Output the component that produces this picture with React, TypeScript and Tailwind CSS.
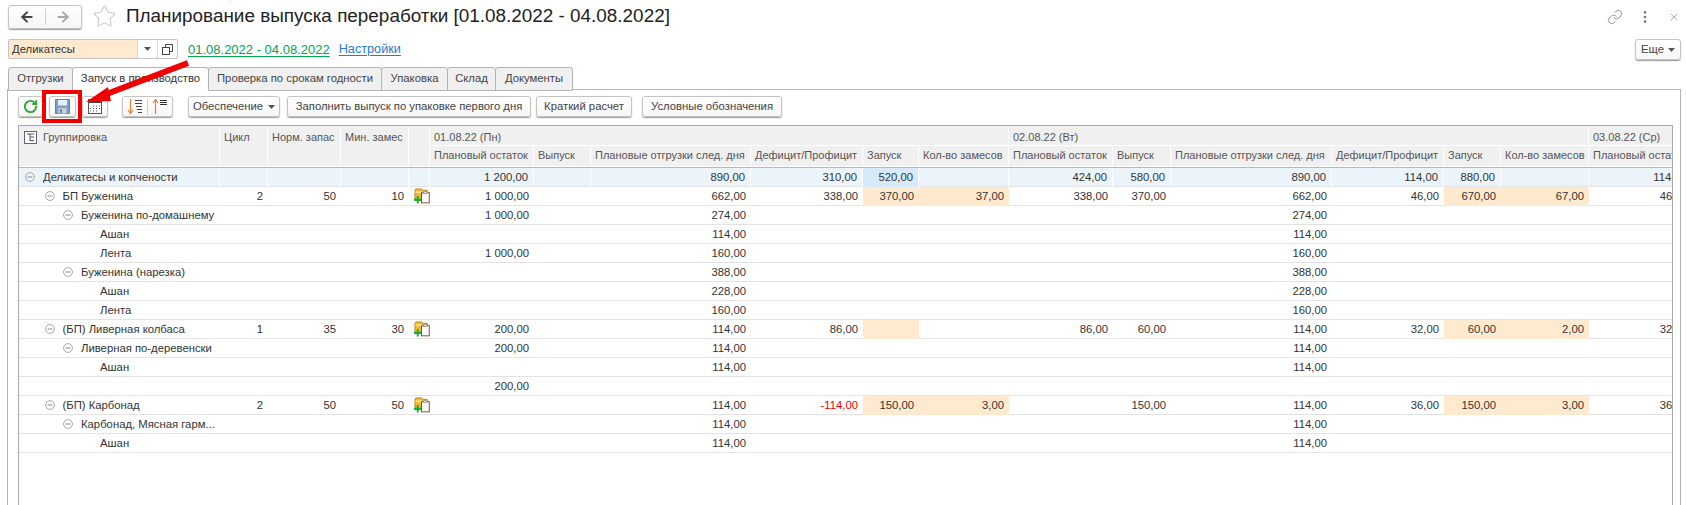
import { ArrowLeft, ArrowRight, EllipsisVertical, Link, RotateCw, Star, X } from "lucide-react";
import type { ReactNode } from "react";

const gridCols =
  "grid grid-cols-[201px_48px_73px_68px_21px_104px_57px_160px_112px_56px_90px_104px_58px_161px_112px_57px_88px_104px]";

const btn =
  "flex items-center justify-center bg-gradient-to-b from-white to-[#f6f6f6] border border-[#c4c4c4] rounded-[3px] shadow-[0_1px_1px_#9a9a9a] text-[#444]";

type Row = {
  name: string;
  level: number;
  tree?: boolean;
  plan?: string[];
  icon?: boolean;
  values: string[];
  warm?: number[];
  picked?: number[];
  red?: number[];
};

// индексы values: 0-5 первый день, 6-11 второй день, 12 третий
const rows: Row[] = [
  {
    name: "Деликатесы и копчености",
    level: 0,
    tree: true,
    values: ["1 200,00", "", "890,00", "310,00", "520,00", "", "424,00", "580,00", "890,00", "114,00", "880,00", "", "114,00"],
    picked: [4],
  },
  {
    name: "БП Буженина",
    level: 1,
    tree: true,
    plan: ["2", "50", "10"],
    icon: true,
    values: ["1 000,00", "", "662,00", "338,00", "370,00", "37,00", "338,00", "370,00", "662,00", "46,00", "670,00", "67,00", "46,00"],
    warm: [4, 5, 10, 11],
  },
  {
    name: "Буженина по-домашнему",
    level: 2,
    tree: true,
    values: ["1 000,00", "", "274,00", "", "", "", "", "", "274,00", "", "", "", ""],
  },
  { name: "Ашан", level: 3, values: ["", "", "114,00", "", "", "", "", "", "114,00", "", "", "", ""] },
  { name: "Лента", level: 3, values: ["1 000,00", "", "160,00", "", "", "", "", "", "160,00", "", "", "", ""] },
  {
    name: "Буженина (нарезка)",
    level: 2,
    tree: true,
    values: ["", "", "388,00", "", "", "", "", "", "388,00", "", "", "", ""],
  },
  { name: "Ашан", level: 3, values: ["", "", "228,00", "", "", "", "", "", "228,00", "", "", "", ""] },
  { name: "Лента", level: 3, values: ["", "", "160,00", "", "", "", "", "", "160,00", "", "", "", ""] },
  {
    name: "(БП) Ливерная колбаса",
    level: 1,
    tree: true,
    plan: ["1", "35", "30"],
    icon: true,
    values: ["200,00", "", "114,00", "86,00", "", "", "86,00", "60,00", "114,00", "32,00", "60,00", "2,00", "32,00"],
    warm: [4, 10, 11],
  },
  {
    name: "Ливерная по-деревенски",
    level: 2,
    tree: true,
    values: ["200,00", "", "114,00", "", "", "", "", "", "114,00", "", "", "", ""],
  },
  { name: "Ашан", level: 3, values: ["", "", "114,00", "", "", "", "", "", "114,00", "", "", "", ""] },
  { name: "", level: 3, values: ["200,00", "", "", "", "", "", "", "", "", "", "", "", ""] },
  {
    name: "(БП) Карбонад",
    level: 1,
    tree: true,
    plan: ["2", "50", "50"],
    icon: true,
    values: ["", "", "114,00", "-114,00", "150,00", "3,00", "", "150,00", "114,00", "36,00", "150,00", "3,00", "36,00"],
    warm: [4, 5, 10, 11],
    red: [3],
  },
  {
    name: "Карбонад, Мясная гарм...",
    level: 2,
    tree: true,
    values: ["", "", "114,00", "", "", "", "", "", "114,00", "", "", "", ""],
  },
  { name: "Ашан", level: 3, values: ["", "", "114,00", "", "", "", "", "", "114,00", "", "", "", ""] },
];

const subHeaders = ["Плановый остаток", "Выпуск", "Плановые отгрузки след. дня", "Дефицит/Профицит", "Запуск", "Кол-во замесов"];

const levelPadding = ["pl-[24px]", "pl-[43.5px]", "pl-[62px]", "pl-[81px]"];

const Triangle = () => (
  <svg width="7" height="4" viewBox="0 0 7 4">
    <path d="M0 0h7L3.5 4z" fill="#555" />
  </svg>
);

const TreeMinus = () => (
  <svg width="10" height="10" viewBox="0 0 10 10" className="absolute left-[-18px] top-[4px]">
    <circle cx="5" cy="5" r="4.4" fill="none" stroke="#a8a8a8" />
    <path d="M2.5 5h5" stroke="#888" />
  </svg>
);

const FolderPlus = () => (
  <svg width="16" height="17" viewBox="0 0 17 17" className="shrink-0">
    <path d="M1 14V3l1-1.5h6L9.5 3H14v4H8v7z" fill="#f2b933" stroke="#a8700f" strokeWidth="0.8" />
    <path d="M1.5 5h12" stroke="#ffe9a0" strokeWidth="1.5" />
    <rect x="8" y="5.5" width="8.2" height="10.8" fill="#fff" stroke="#7a4a1e" />
    <rect x="10" y="4.5" width="4" height="2" fill="#ddd" stroke="#777" strokeWidth="0.6" />
    <path d="M4 9v8M0 13h8" stroke="#12b02e" strokeWidth="2" />
  </svg>
);

const SaveIcon = () => (
  <svg width="15" height="15" viewBox="0 0 15 15">
    <path d="M0.5 0.5h14v14h-14z" fill="#7aa2c8" stroke="#5f86ad" />
    <rect x="3" y="1" width="9" height="5.5" fill="#e6eef6" />
    <rect x="3.5" y="9" width="8" height="5.5" fill="#c9d2db" />
    <rect x="5" y="10" width="2" height="4" fill="#6f88a0" />
  </svg>
);

const CalendarIcon = () => (
  <svg width="14" height="15" viewBox="0 0 14 15">
    <rect x="0.5" y="0.5" width="13" height="14" fill="#fff" stroke="#555" />
    <rect x="0.5" y="0.5" width="13" height="3.5" fill="#444" />
    <path d="M5 7h1M8 7h1M11 7h1M5 9.5h1M8 9.5h1M11 9.5h1M2 9.5h1M2 12h1M5 12h1M8 12h1" stroke="#555" />
  </svg>
);

const SortDown = () => (
  <svg width="16" height="16" viewBox="0 0 16 16">
    <path d="M3.5 0v14M1 11l2.5 3.5L6 11" fill="none" stroke="#ee7d31" strokeWidth="1.2" />
    <path d="M8 1.5h7M8 4.5h7M9 7.5h6M10 10.5h5M11 13.5h4" stroke="#444" />
  </svg>
);

const SortUp = () => (
  <svg width="16" height="16" viewBox="0 0 16 16">
    <path d="M3.5 15V1M1 4l2.5-3.5L6 4" fill="none" stroke="#ee7d31" strokeWidth="1.2" />
    <path d="M8 1.5h7M8 3.5h7M8 5.5h7" stroke="#333" />
  </svg>
);

const CopyIcon = () => (
  <svg width="11" height="11" viewBox="0 0 11 11">
    <path d="M3.5 3V0.5h7v7H8" fill="none" stroke="#444" />
    <rect x="0.5" y="3.5" width="7" height="7" fill="#fff" stroke="#444" />
  </svg>
);

const GroupIcon = () => (
  <svg width="13" height="13" viewBox="0 0 13 13" className="shrink-0 mt-[4px]">
    <rect x="0.5" y="0.5" width="12" height="12" fill="#fff" stroke="#667" />
    <path d="M3 3h7M6 3v7M6 6h4M6 9.5h4" stroke="#556" fill="none" />
  </svg>
);

const Tab = ({ width, active, children }: { width: string; active?: boolean; children: ReactNode }) => (
  <div
    className={`${width} h-[24px] flex items-center justify-center pb-[2px] border border-[#b4b4b4] rounded-t-[3px] -mr-px ${
      active ? "bg-white border-b-white text-[#333] relative z-10" : "bg-[#f0f0f0] text-[#444]"
    }`}
  >
    {children}
  </div>
);

const HeadCell = ({ className, children }: { className?: string; children?: ReactNode }) => (
  <div
    className={`bg-[#f0f0f0] border-r border-b border-white pl-[4px] pt-[1px] overflow-hidden whitespace-nowrap text-[11px] text-[#555] ${
      className ?? ""
    }`}
  >
    {children}
  </div>
);

const DataRow = ({ row, first }: { row: Row; first: boolean }) => {
  const tint = first ? "border-r border-white" : "";
  return (
    <div className={`${gridCols} h-[19px] border-b border-[#e3e3e3] leading-[19px] ${first ? "bg-[#ebf4fb]" : ""}`}>
      <div className={`${levelPadding[row.level]} ${tint}`}>
        <div className="relative">
          {row.tree && <TreeMinus />}
          <div className="truncate">{row.name}</div>
        </div>
      </div>
      {[0, 1, 2].map((i) => (
        <div key={i} className={`text-right pr-[5px] ${tint}`}>
          {row.plan?.[i] ?? ""}
        </div>
      ))}
      <div className={`flex items-start pl-[5px] ${tint}`}>{row.icon && <FolderPlus />}</div>
      {row.values.map((v, i) => {
        const warm = row.warm?.includes(i);
        const picked = row.picked?.includes(i);
        const red = row.red?.includes(i);
        return (
          <div
            key={i}
            className={`text-right pr-[5px] ${tint} ${warm ? "bg-[#ffeacf]" : ""} ${picked ? "bg-[#d6eafa]" : ""} ${
              red ? "text-[#f00000]" : ""
            }`}
          >
            {v}
          </div>
        );
      })}
    </div>
  );
};

export default function App() {
  return (
    <div className="relative w-[1686px] h-[505px] overflow-hidden bg-white font-['Liberation_Sans',Arial,sans-serif] text-[11.3px] text-[#333]">
      {/* заголовок */}
      <div className="h-[33px] flex items-center pl-[8px] pr-[5px]">
        <div className={`${btn} w-[74px] h-[24px]`}>
          <div className="flex-1 flex justify-center border-r border-[#d0d0d0]">
            <ArrowLeft size={16} strokeWidth={3} color="#444" />
          </div>
          <div className="flex-1 flex justify-center">
            <ArrowRight size={16} strokeWidth={3} color="#aaa" />
          </div>
        </div>
        <Star size={25} strokeWidth={1} color="#c8c8c8" className="ml-[10px]" />
        <div className="ml-[9px] text-[18.9px] text-[#222] whitespace-nowrap">
          Планирование выпуска переработки [01.08.2022 - 04.08.2022]
        </div>
        <div className="ml-auto flex items-center text-[#777]">
          <Link size={16} strokeWidth={1.2} />
          <EllipsisVertical size={16} strokeWidth={2} className="ml-[14px]" />
          <X size={12} strokeWidth={1.2} className="ml-[15px] mr-[1px]" />
        </div>
      </div>

      {/* отбор */}
      <div className="h-[34px] flex items-start pt-[6px] pl-[8px] pr-[5px]">
        <div className="w-[170px] h-[20px] flex border border-[#c4c4c4] rounded-[2px] bg-white">
          <div className="w-[128px] bg-[#ffeacf] pl-[3px] leading-[18px] text-[#333]">Деликатесы</div>
          <div className="w-[20px] flex items-center justify-center border-l border-[#d8d8d8]">
            <Triangle />
          </div>
          <div className="flex-1 flex items-center justify-center border-l border-[#d8d8d8]">
            <CopyIcon />
          </div>
        </div>
        <span className="ml-[10px] mt-[1px] text-[13px] text-[#00a550] underline underline-offset-2">
          01.08.2022 - 04.08.2022
        </span>
        <span className="ml-[9px] mt-[1px] text-[12.7px] text-[#2a7ad1] underline underline-offset-2">Настройки</span>
        <div className={`${btn} ml-auto w-[46px] h-[21px] gap-[4px]`}>
          Еще <Triangle />
        </div>
      </div>

      {/* закладки */}
      <div className="h-[22px] flex pl-[8px] items-start relative z-10">
        <Tab width="w-[65px]">Отгрузки</Tab>
        <Tab width="w-[137px]" active>
          Запуск в производство
        </Tab>
        <Tab width="w-[174px]">Проверка по срокам годности</Tab>
        <Tab width="w-[67px]">Упаковка</Tab>
        <Tab width="w-[49px]">Склад</Tab>
        <Tab width="w-[78px]">Документы</Tab>
      </div>

      {/* панель */}
      <div className="ml-[7px] mr-[5px] h-[416px] border border-b-0 border-[#b4b4b4] pl-[10px] pr-[8px] pt-[6px]">
        <div className="h-[29px] flex items-start">
          <div className={`${btn} w-[25px] h-[21px]`}>
            <RotateCw size={15} strokeWidth={3} color="#2fa82f" />
          </div>
          <div className={`${btn} w-[27px] h-[21px] ml-[6px]`}>
            <SaveIcon />
          </div>
          <div className={`${btn} w-[26px] h-[21px] ml-[6px]`}>
            <CalendarIcon />
          </div>
          <div className={`${btn} w-[51px] h-[21px] ml-[14px]`}>
            <div className="flex-1 flex justify-center border-r border-[#d0d0d0]">
              <SortDown />
            </div>
            <div className="flex-1 flex justify-center">
              <SortUp />
            </div>
          </div>
          <div className={`${btn} w-[92px] h-[21px] ml-[15px] gap-[5px]`}>
            Обеспечение <Triangle />
          </div>
          <div className={`${btn} w-[244px] h-[21px] ml-[7px]`}>Заполнить выпуск по упаковке первого дня</div>
          <div className={`${btn} w-[96px] h-[21px] ml-[5px]`}>Краткий расчет</div>
          <div className={`${btn} w-[140px] h-[21px] ml-[10px]`}>Условные обозначения</div>
        </div>

        {/* таблица */}
        <div className="w-[1655px] h-[400px] border border-b-0 border-[#a8a8a8] overflow-hidden">
          <div className={`${gridCols} grid-rows-[20px_21px] border-b border-[#b8b8b8]`}>
            <HeadCell className="row-span-2 flex items-start gap-[6px] pl-[5px]">
              <GroupIcon />
              <span className="mt-[2px]">Группировка</span>
            </HeadCell>
            <HeadCell className="row-span-2">
              <div className="mt-[2px]">Цикл</div>
            </HeadCell>
            <HeadCell className="row-span-2">
              <div className="mt-[2px]">Норм. запас</div>
            </HeadCell>
            <HeadCell className="row-span-2">
              <div className="mt-[2px]">Мин. замес</div>
            </HeadCell>
            <HeadCell className="row-span-2" />
            <HeadCell className="col-span-6">
              <div className="mt-[2px]">01.08.22 (Пн)</div>
            </HeadCell>
            <HeadCell className="col-span-6">
              <div className="mt-[2px]">02.08.22 (Вт)</div>
            </HeadCell>
            <HeadCell>
              <div className="mt-[2px]">03.08.22 (Ср)</div>
            </HeadCell>
            {subHeaders.map((h) => (
              <HeadCell key={`a${h}`}>{h}</HeadCell>
            ))}
            {subHeaders.map((h) => (
              <HeadCell key={`b${h}`}>{h}</HeadCell>
            ))}
            <HeadCell>Плановый остаток</HeadCell>
          </div>
          {rows.map((row, i) => (
            <DataRow key={i} row={row} first={i === 0} />
          ))}
        </div>
      </div>

      {/* красная рамка и стрелка поверх кнопки */}
      <div className="absolute z-20 left-[42px] top-[90px] w-[40px] h-[33px] border-[4px] border-[#f00000]" />
      <svg className="absolute z-20 left-[80px] top-[56px]" width="115" height="52" viewBox="0 0 115 52">
        <path d="M108 7 L24 39" stroke="#f00000" strokeWidth="6" />
        <path d="M6 46 L28 31 L31 45 z" fill="#f00000" />
      </svg>
    </div>
  );
}
